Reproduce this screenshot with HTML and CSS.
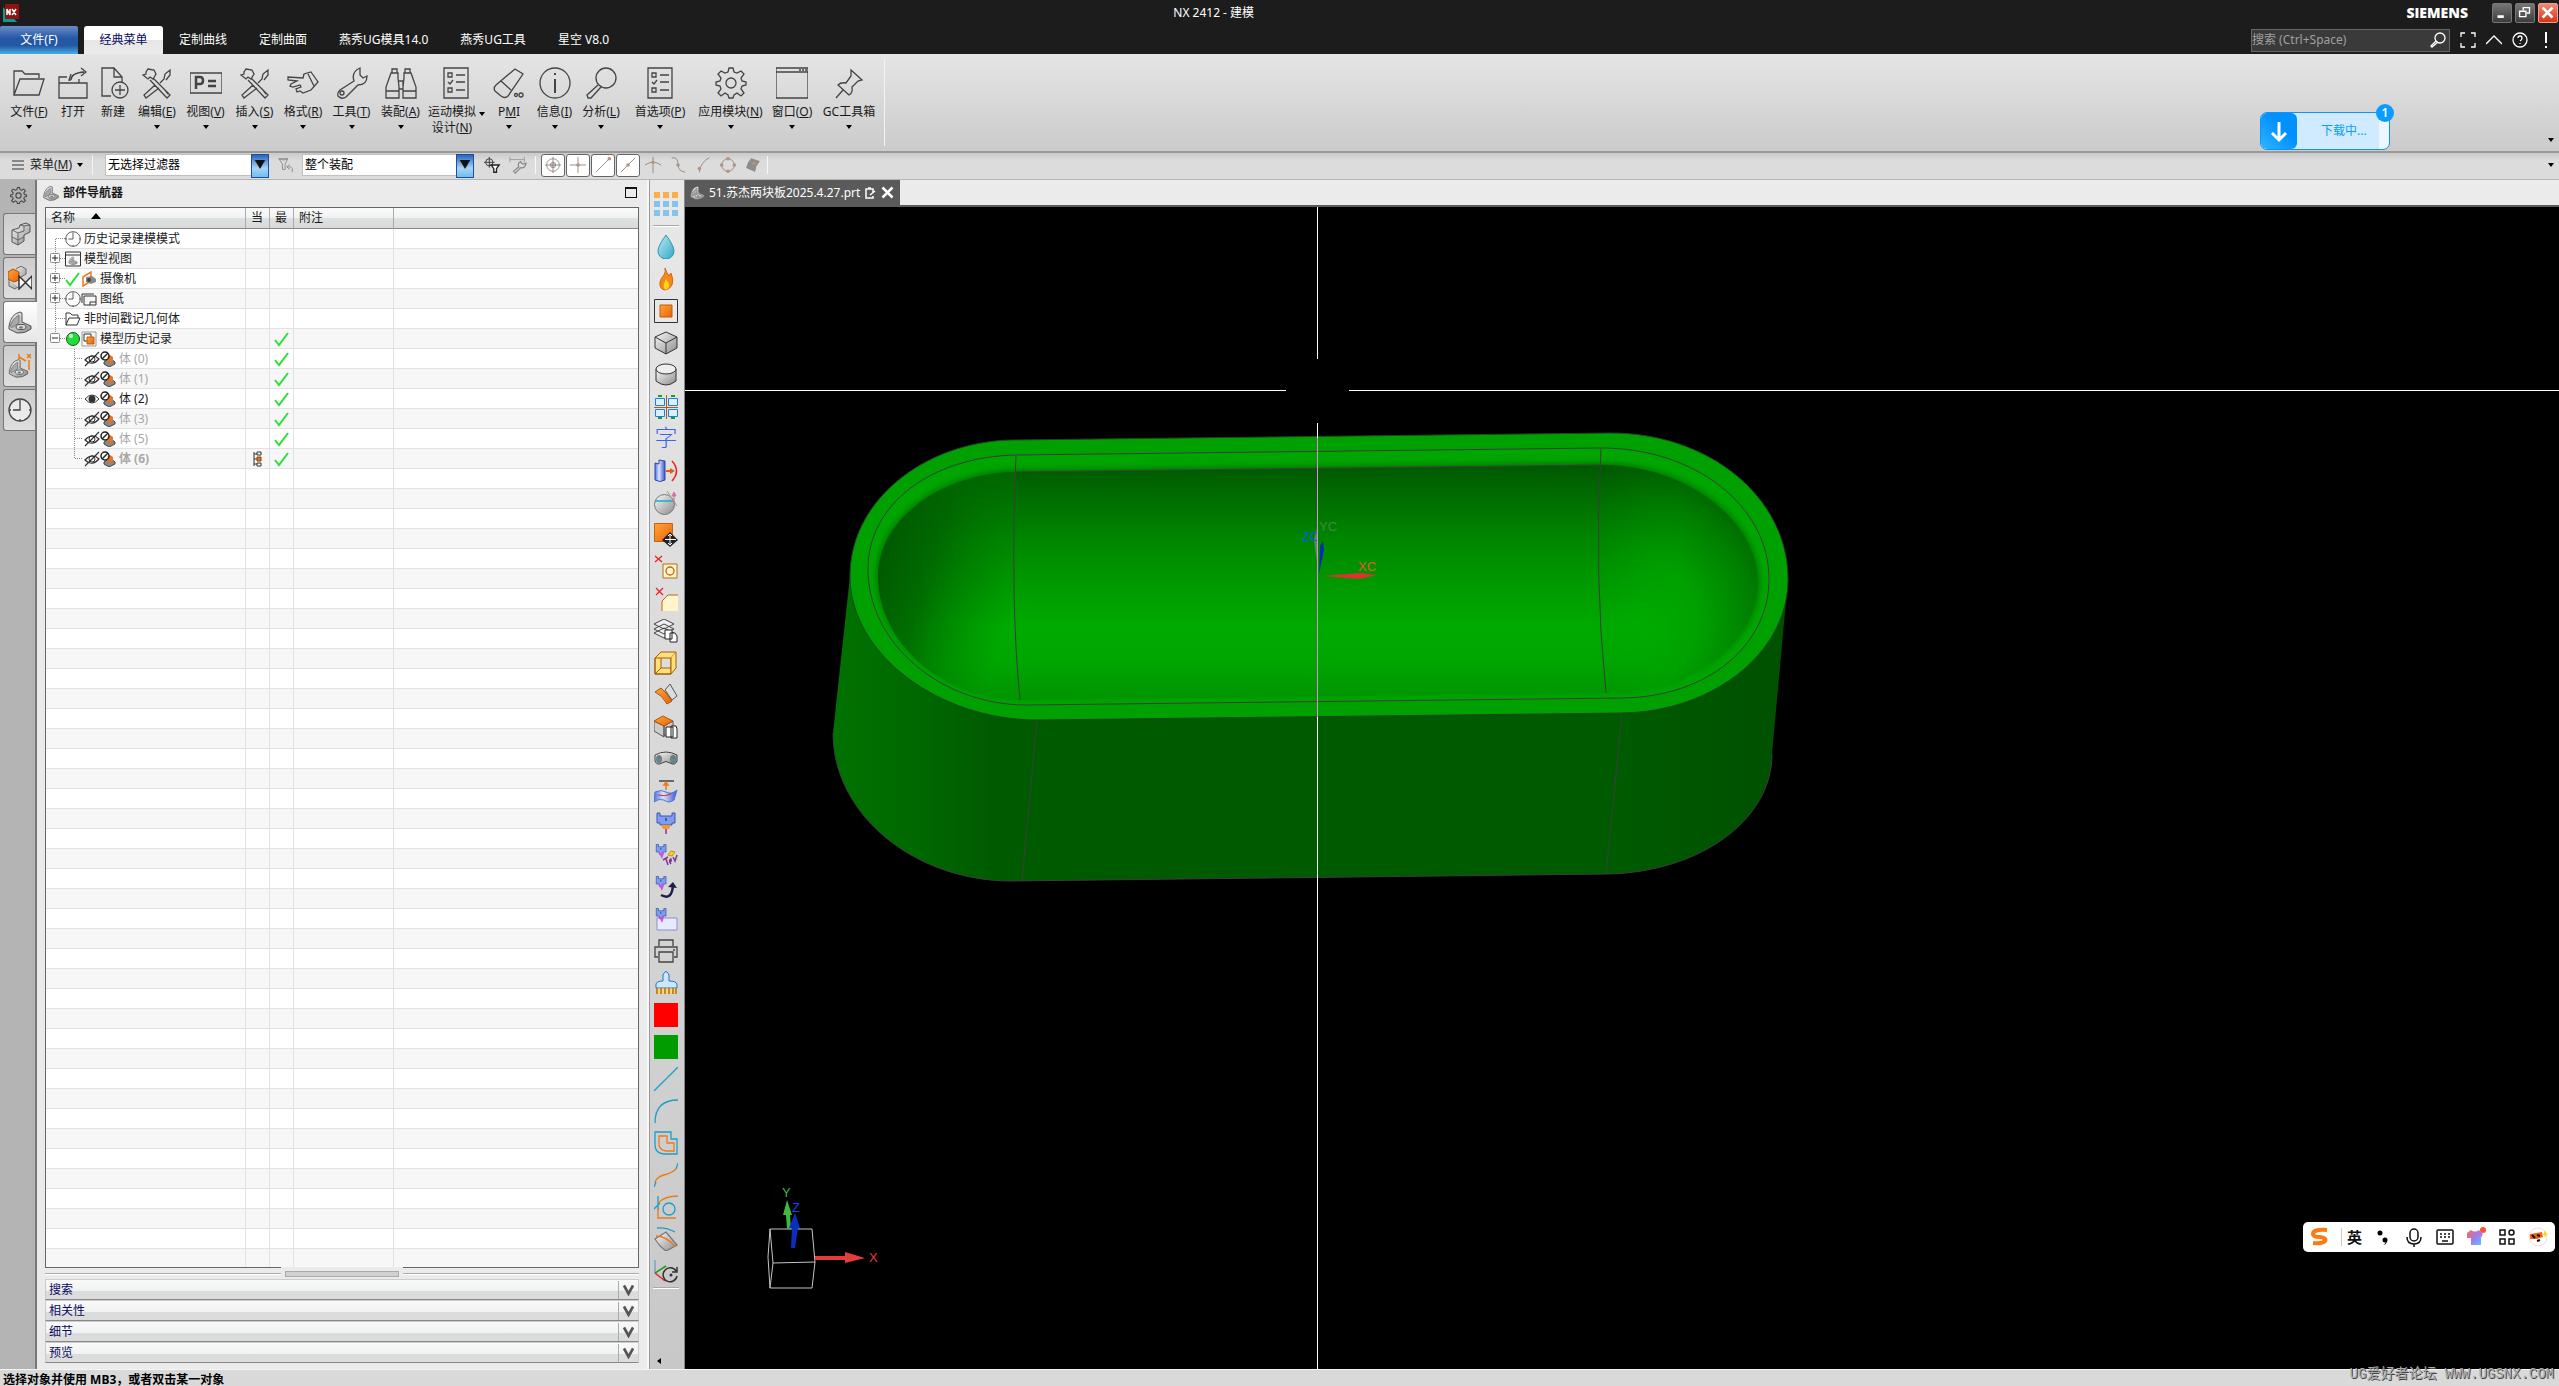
FILE: index.html
```html
<!DOCTYPE html>
<html lang="zh-CN">
<head>
    <meta charset="UTF-8">
    <title>NX 2412 - 建模</title>
    <link rel="stylesheet" href="styles.css">
    <script src="tree.js" defer></script>
</head>
<body>
    <!-- shared icons -->
    <svg class="defs" aria-hidden="true">
        <defs>
            <linearGradient id="metal" x1="0" y1="0" x2="1" y2="1"><stop offset="0" stop-color="#fafafa"/><stop offset="1" stop-color="#8c8c8c"/></linearGradient>
            <linearGradient id="orange" x1="0" y1="0" x2="1" y2="1"><stop offset="0" stop-color="#ffa436"/><stop offset="1" stop-color="#e8640a"/></linearGradient>
            <linearGradient id="blue" x1="0" y1="0" x2="1" y2="0"><stop offset="0" stop-color="#4a6fe0"/><stop offset=".4" stop-color="#dbe5ff"/><stop offset="1" stop-color="#3a55c8"/></linearGradient>
            <linearGradient id="water" x1="0" y1="0" x2="1" y2="1"><stop offset="0" stop-color="#bfeaf5"/><stop offset="1" stop-color="#2fa9c4"/></linearGradient>
            <linearGradient id="shirt" x1="0" y1="0" x2="1" y2="1"><stop offset="0" stop-color="#ff6a4a"/><stop offset=".5" stop-color="#a678f0"/><stop offset="1" stop-color="#4ad0ff"/></linearGradient>
        </defs>
        <symbol id="tools" viewBox="0 0 32 32">
            <path d="M7 2l6 1 2 4-3 5-3-2-2 2-5-4 3-1V5zM12 11l17 17-3 3L9 13M25 13l4-5V3l-5 4-1 5-4 4M14 18L3 28l2 3L18 21M24 23l3 4"/>
        </symbol>
        <symbol id="checklist" viewBox="0 0 32 32">
            <path d="M4 1h24v30H4zM8 6h4v4H8zM8 21h4v4H8zM16 8h9M16 15h9M16 23h9M8 15l2 2 3-4"/>
        </symbol>
        <symbol id="gear" viewBox="0 0 32 32">
            <path d="M14 1h4l1 4 3 1 4-2 3 3-3 4 1 3 4 1v3l-4 1-1 3 3 4-3 3-4-3-3 2-1 3h-4l-1-3-3-2-4 3-3-3 3-4-1-3-4-1v-3l4-1 1-3-3-4 3-3 4 2 3-1z"/><circle cx="16" cy="16" r="5"/>
        </symbol>
        <symbol id="bracket" viewBox="0 0 24 24">
            <path d="M1 16Q3 4 12 2l2 1v9l9 4v3q-6 5-14 4l-8-4z" fill="url(#metal)" stroke="#555"/><path d="M2 17q2-8 9-12v8l-8 5" fill="#aaa" stroke="#777"/><ellipse cx="13" cy="17" rx="5" ry="2.6" fill="#ddd" stroke="#555"/><ellipse cx="13" cy="17.500" rx="2" ry="1.200" fill="#777"/>
        </symbol>
        <symbol id="clock" viewBox="0 0 24 24">
            <circle cx="12" cy="12" r="11" fill="#fff" fill-opacity=".5" stroke="#444" stroke-width="1.300"/><path d="M12 2v10H5M1 12h2M21 12h2M12 21v2" fill="none" stroke="#444" stroke-width="1.300"/>
        </symbol>
        <symbol id="check" viewBox="0 0 16 16"><path d="M1 9l4 5L14 2" fill="none" stroke="#2be03a" stroke-width="2"/></symbol>
        <symbol id="lens" viewBox="0 0 16 16"><circle cx="10" cy="6" r="5"/><path d="M6 9l-5 5 1 1 6-5"/></symbol>
        <symbol id="eye-off" viewBox="0 0 16 16"><path d="M1 9q7-8 14-1-7 8-14 1zM1 15L15 1" fill="none" stroke="#333" stroke-width="1.200"/><circle cx="8" cy="8" r="3" fill="none" stroke="#333"/></symbol>
        <symbol id="eye" viewBox="0 0 16 16"><path d="M1 8q7-8 14 0-7 8-14 0z" fill="#fff" stroke="#333"/><circle cx="8" cy="8" r="3.500" fill="#333"/></symbol>
        <symbol id="solid" viewBox="0 0 16 16"><path d="M4 11l6-4 5 4v2l-6 3-5-3z" fill="#888" stroke="#444"/><path d="M7 5l3-1 3 2v4l-3 2-3-2z" fill="#e8731c"/><circle cx="5" cy="5" r="4" fill="#fff" fill-opacity=".7" stroke="#222" stroke-width="1.500"/><path d="M2 8l6-6" stroke="#222" stroke-width="1.500"/></symbol>
        <symbol id="line-plus" viewBox="0 0 20 19"><path d="M9.500 0v19M14 9.500h6" stroke="#888" stroke-dasharray="1 1"/><rect x="4.500" y="4.500" width="9" height="9" rx="1" fill="#fff" stroke="#888"/><path d="M6 9h6M9 6v6" stroke="#222"/></symbol>
        <symbol id="line-minus" viewBox="0 0 20 19"><path d="M9.500 0v5M14 9.500h6" stroke="#888" stroke-dasharray="1 1"/><rect x="4.500" y="4.500" width="9" height="9" rx="1" fill="#fff" stroke="#888"/><path d="M6 9h6" stroke="#222"/></symbol>
        <symbol id="line-top" viewBox="0 0 20 19"><path d="M9.500 10v9M10 9.500h9" fill="none" stroke="#888" stroke-dasharray="1 1"/></symbol>
        <symbol id="line-mid" viewBox="0 0 20 19"><path d="M9.500 0v19M10 9.500h9" fill="none" stroke="#888" stroke-dasharray="1 1"/></symbol>
        <symbol id="line-child" viewBox="0 0 38 19"><path d="M28.500 0v19M29 9.500h8" fill="none" stroke="#888" stroke-dasharray="1 1"/></symbol>
        <symbol id="line-last" viewBox="0 0 38 19"><path d="M28.500 0v10M29 9.500h8" fill="none" stroke="#888" stroke-dasharray="1 1"/></symbol>
        <symbol id="robot" viewBox="0 0 24 24"><path d="M3 2h3v3h7V2h3v10h-4v3H7v-3H3z" fill="#7f9df0" stroke="#3c55b0"/><path d="M9 7v2" stroke="#123"/></symbol>
    </svg>

    <header class="titlebar">
        <svg class="app-logo" viewBox="0 0 18 18"><path d="M0 3v15h14" fill="#0a9a9a"/><rect x="2" y="0" width="14" height="15" fill="#8f1410"/><path d="M4 11V5l3 6V5M9 5l4 6M13 5l-4 6" fill="none" stroke="#fff" stroke-width="1.500"/></svg>
        <div class="window-title">NX 2412 - 建模</div>
        <div class="brand">SIEMENS</div>
        <div class="window-buttons">
            <button aria-label="最小化"><svg viewBox="0 0 20 20"><path d="M5 14h7" stroke="#fff" stroke-width="3"/></svg></button>
            <button aria-label="还原"><svg viewBox="0 0 20 20"><path d="M4 8h7v6H4zM8 7V4h7v6h-3" fill="none" stroke="#fff" stroke-width="1.500"/></svg></button>
            <button class="close" aria-label="关闭"><svg viewBox="0 0 20 20"><path d="M4 4l11 11M15 4L4 15" stroke="#fff" stroke-width="3"/></svg></button>
        </div>
    </header>

    <nav class="menubar">
        <button class="menu-tab file">文件(F)</button>
        <button class="menu-tab active">经典菜单</button>
        <button class="menu-tab">定制曲线</button>
        <button class="menu-tab">定制曲面</button>
        <button class="menu-tab">燕秀UG模具14.0</button>
        <button class="menu-tab">燕秀UG工具</button>
        <button class="menu-tab">星空 V8.0</button>
        <div class="menu-right">
            <div class="search">
                <input type="text" aria-label="搜索" placeholder="搜索 (Ctrl+Space)">
                <svg viewBox="0 0 16 16"><use href="#lens"/></svg>
            </div>
            <button aria-label="全屏"><svg viewBox="0 0 16 16"><path d="M1 5V1h4M11 1h4v4M15 11v4h-4M5 15H1v-4"/></svg></button>
            <button aria-label="折叠"><svg viewBox="0 0 16 16"><path d="M0 12l8-8 8 8"/></svg></button>
            <button aria-label="帮助"><svg viewBox="0 0 16 16"><circle cx="8" cy="8" r="7"/><path d="M6 6q0-2 2-2t2 2-2 3M8 11v1"/></svg></button>
            <button aria-label="提示"><svg viewBox="0 0 16 16"><path d="M8 0v11M8 14v2" stroke-width="2"/></svg></button>
        </div>
    </nav>

    <section class="ribbon">
        <div class="ribbon-tools">
            <button class="tool"><svg viewBox="0 0 32 32"><path d="M1 28V4h8l3 3h14v4M1 28L7 12h24l-5 16z"/></svg>文件(<u>F</u>)<i class="arrow"></i></button>
            <button class="tool"><svg viewBox="0 0 32 32"><path d="M2 16h28v15H2zM2 16v-6h8M22 16v-4M14 13q0-7 13-8M24 1l5 4-5 4M14 13h-2l2-6"/></svg>打开</button>
            <button class="tool"><svg viewBox="0 0 32 32"><path d="M14 29H5V1h12l8 9v6M17 1v9h8"/><circle cx="23" cy="23" r="8"/><path d="M23 18v10M18 23h10"/></svg>新建</button>
            <button class="tool"><svg><use href="#tools"/></svg>编辑(<u>E</u>)<i class="arrow"></i></button>
            <button class="tool"><svg viewBox="0 0 32 32"><path d="M0 6h32v20H0z"/><path d="M6 22V10h4q3 0 3 3.500T10 17H6M18 14h8M18 19h8" stroke-width="2.500"/></svg>视图(<u>V</u>)<i class="arrow"></i></button>
            <button class="tool"><svg><use href="#tools"/></svg>插入(<u>S</u>)<i class="arrow"></i></button>
            <button class="tool"><svg viewBox="0 0 32 32"><path d="M24 5l7 10-7 8-8 3-3-2-3 1-1-3 5-2-1-2-7 2-3-1 1-2 6-3-9-1v-3l15 1 1-4zM21 7l6 12"/></svg>格式(<u>R</u>)<i class="arrow"></i></button>
            <button class="tool"><svg viewBox="0 0 32 32"><path d="M18 14q-3-9 6-13v7l3 3 4-2q0 9-9 9L10 30q-4 3-8-1-1-3 2-6z"/><circle cx="6" cy="26" r="2"/></svg>工具(<u>T</u>)<i class="arrow"></i></button>
            <button class="tool"><svg viewBox="0 0 32 32"><path d="M6 6h7v5l1 9v11H1V20zM19 6h7l5 14v11H18V20l1-9zM7 2h5v4H7zM20 2h5v4h-5zM14 14h4v8h-4M1 24h13M18 24h13"/></svg>装配(<u>A</u>)<i class="arrow"></i></button>
            <button class="tool wide"><svg><use href="#checklist"/></svg><span>运动模拟<br>设计(<u>N</u>)</span><i class="arrow"></i></button>
            <button class="tool"><svg viewBox="0 0 32 32"><path d="M22 2l8 5-15 22q-3 3-7 0l-6-5q-2-3 1-6zM8 14l10 9"/><circle cx="23" cy="28" r="1.500"/><circle cx="28" cy="28" r="2"/></svg>P<u>M</u>I<i class="arrow"></i></button>
            <button class="tool"><svg viewBox="0 0 32 32"><circle cx="16" cy="16" r="15"/><path d="M16 12v14M16 6v2" stroke-width="2"/></svg>信息(<u>I</u>)<i class="arrow"></i></button>
            <button class="tool"><svg viewBox="0 0 32 32"><circle cx="21" cy="11" r="10"/><path d="M13 18L2 28l1 3 3 0 10-11"/></svg>分析(<u>L</u>)<i class="arrow"></i></button>
            <button class="tool"><svg><use href="#checklist"/></svg>首选项(<u>P</u>)<i class="arrow"></i></button>
            <button class="tool"><svg><use href="#gear"/></svg>应用模块(<u>N</u>)<i class="arrow"></i></button>
            <button class="tool"><svg viewBox="0 0 32 32"><path d="M0 1h32v30H0zM0 5h32M23 3h2M26 3h2M29 3h2"/></svg>窗口(<u>O</u>)<i class="arrow"></i></button>
            <button class="tool"><svg viewBox="0 0 32 32"><path d="M18 3l11 10-4 1-6 6q1 6-3 8L5 18q3-3 8-2l5-7zM10 23l-7 8"/></svg>GC工具箱<i class="arrow"></i></button>
        </div>
        <div class="ribbon-end">
            <button class="download">
                <svg viewBox="0 0 36 36"><path d="M18 9v17M11 20l7 7 7-7" fill="none" stroke="#fff" stroke-width="3"/></svg>
                <span>下载中...</span>
                <b>1</b>
            </button>
            <i class="arrow"></i>
        </div>
    </section>

    <section class="selectbar">
        <button class="main-menu"><svg viewBox="0 0 12 12"><path d="M0 2h12M0 6h12M0 10h12"/></svg>菜单(<u>M</u>)<i class="arrow"></i></button>
        <label class="combo filter"><select aria-label="选择过滤器"><option>无选择过滤器</option></select></label>
        <svg class="icon" viewBox="0 0 20 20"><path d="M2 3h10l-3 6v6H6V9zM2 3q5 3 10 0M11 12h4q3 1 2 6M14 9l-3 3 3 3" stroke="#888" fill="none"/></svg>
        <label class="combo scope"><select aria-label="选择范围"><option>整个装配</option></select></label>
        <svg class="icon" viewBox="0 0 20 20"><circle cx="7" cy="7" r="4" fill="none" stroke="#333"/><path d="M7 1v12M1 7h12" stroke="#333"/><path d="M9 10h9l-3 4v4h-3v-4z" fill="#fff" stroke="#222" stroke-width="1.500"/></svg>
        <svg class="icon" viewBox="0 0 20 20"><path d="M1 4h16M1 1v6M17 1v6" stroke="#999"/><path d="M13 6q-4 2-2 6l-6 5 2 2 6-6q5 1 6-5l-3 1-2-1z" fill="none" stroke="#888" stroke-width="1.300"/></svg>
        <span class="divider"></span>
        <button class="snap on"><svg viewBox="0 0 20 20"><circle cx="10" cy="10" r="7"/><circle cx="10" cy="10" r="3"/><path d="M10 1v18M1 10h18"/><circle class="dot" cx="10" cy="10" r="2"/></svg></button>
        <button class="snap on"><svg viewBox="0 0 20 20"><path d="M10 1v18M1 10h18"/><circle class="dot" cx="10" cy="10" r="2"/></svg></button>
        <button class="snap on"><svg viewBox="0 0 20 20"><path d="M2 18L17 3"/><circle class="dot" cx="17" cy="3" r="2"/></svg></button>
        <button class="snap on"><svg viewBox="0 0 20 20"><path d="M2 18L18 2"/><circle class="dot" cx="10" cy="10" r="2"/></svg></button>
        <button class="snap"><svg viewBox="0 0 20 20"><path d="M1 10q9-6 18 0M10 1v18"/><circle class="dot" cx="10" cy="7" r="2"/></svg></button>
        <button class="snap"><svg viewBox="0 0 20 20"><path d="M3 2q7-1 7 7t8 9"/><circle class="dot" cx="10" cy="10" r="2"/></svg></button>
        <button class="snap"><svg viewBox="0 0 20 20"><path d="M17 2Q7 7 6 18"/><circle class="dot" cx="6" cy="14" r="2"/></svg></button>
        <button class="snap"><svg viewBox="0 0 20 20"><circle cx="10" cy="10" r="7"/><circle class="dot" cx="10" cy="3" r="2"/><circle class="dot" cx="10" cy="17" r="2"/><circle class="dot" cx="3" cy="10" r="2"/><circle class="dot" cx="17" cy="10" r="2"/></svg></button>
        <button class="snap"><svg viewBox="0 0 20 20"><path d="M8 3l9 3q-5 5-5 11l-9-4q1-6 5-10z" fill="#8d8d8d"/><circle class="dot" cx="11" cy="8" r="2"/></svg></button>
        <span class="divider"></span>
        <i class="arrow end"></i>
    </section>

    <main class="workspace">
        <nav class="rail">
            <button class="rail-gear" aria-label="设置"><svg class="outline" viewBox="0 0 32 32"><use href="#gear"/></svg></button>
            <button class="rail-tab"><svg viewBox="0 0 24 24"><path d="M4 8l7-2 1-3 6-2 4 2v7l-6 3v6l-6 4-6-3z" fill="url(#metal)" stroke="#555"/><path d="M4 8l6 3 6-2V4l6-1M16 4l-4-1M10 11v11M4 15l6 3 6-3" fill="none" stroke="#666"/></svg></button>
            <button class="rail-tab"><svg viewBox="0 0 24 24"><path d="M8 3l5-3 5 3v5l-5 3M1 14v6l6 3 3-2" fill="url(#metal)" stroke="#666"/><path d="M0 6l5-3 6 3v8l-5 2-6-3z" fill="url(#orange)" stroke="#a85008"/><path d="M11 10v13l13-13v13z" fill="#fff" stroke="#333" stroke-width="1.500"/></svg></button>
            <button class="rail-tab active"><svg><use href="#bracket"/></svg></button>
            <button class="rail-tab"><svg viewBox="0 0 24 24"><use href="#bracket" y="4" width="21" height="20"/><path d="M11 0v6M11 3l7 4M19 0l4 4M23 0l-4 4M21 6v10" fill="none" stroke="#ee7a10" stroke-width="1.500"/></svg></button>
            <button class="rail-tab"><svg><use href="#clock"/></svg></button>
        </nav>

        <aside class="navigator">
            <div class="navigator-title">
                <svg><use href="#bracket"/></svg>
                <h2>部件导航器</h2>
                <button aria-label="最大化"></button>
            </div>
            <div class="tree">
                <table>
                    <colgroup><col class="c-name"><col class="c-flag"><col class="c-flag"><col class="c-note"><col></colgroup>
                    <thead>
                        <tr><th>名称<i class="sort"></i></th><th>当</th><th>最</th><th>附注</th><th></th></tr>
                    </thead>
                    <tbody id="tree-body">
                        <tr><td><div class="node"><svg class="guide"><use href="#line-top"/></svg><svg><use href="#clock"/></svg>历史记录建模模式</div></td><td></td><td></td><td></td><td></td></tr>
                        <tr><td><div class="node"><svg class="guide"><use href="#line-plus"/></svg><svg viewBox="0 0 16 16"><path d="M.500 1h15v14H.500zM1 4h14" fill="none" stroke="#333"/><use href="#bracket" x="3" y="5" width="10" height="9"/></svg>模型视图</div></td><td></td><td></td><td></td><td></td></tr>
                        <tr><td><div class="node"><svg class="guide"><use href="#line-plus"/></svg><svg><use href="#check"/></svg><svg viewBox="0 0 16 16"><path d="M2 6l8-5v9l-8 5z" fill="none" stroke="#e87a1c" stroke-width="1.500"/><path d="M5 6l6-1 4 3v3l-5 2-5-2z" fill="#888"/><circle cx="8" cy="9" r="2" fill="#444"/></svg>摄像机</div></td><td></td><td></td><td></td><td></td></tr>
                        <tr><td><div class="node"><svg class="guide"><use href="#line-plus"/></svg><svg><use href="#clock"/></svg><svg viewBox="0 0 16 16"><path d="M1 12V3h12M3 5h12v9H3zM9 14v-3h6" fill="none" stroke="#333"/></svg>图纸</div></td><td></td><td></td><td></td><td></td></tr>
                        <tr><td><div class="node"><svg class="guide"><use href="#line-mid"/></svg><svg viewBox="0 0 16 16"><path d="M1 14V2h4l2 2h6v3M1 14l3-7h11l-3 7z" fill="none" stroke="#333"/></svg>非时间戳记几何体</div></td><td></td><td></td><td></td><td></td></tr>
                        <tr><td><div class="node"><svg class="guide"><use href="#line-minus"/></svg><svg viewBox="0 0 16 16"><circle cx="8" cy="8" r="6.500" fill="#20dd38" stroke="#225522"/><circle cx="6" cy="5" r="2" fill="#c8ffd0"/></svg><svg viewBox="0 0 16 16"><path d="M1 1h14v14H1z" fill="none" stroke="#999"/><path d="M3 3h7v7H3z" fill="#fff" stroke="#333"/><path d="M6 6h7v7H6z" fill="url(#orange)" stroke="#c45a0a"/></svg>模型历史记录</div></td><td></td><td><svg><use href="#check"/></svg></td><td></td><td></td></tr>
                        <tr class="off"><td><div class="node"><svg class="guide child"><use href="#line-child"/></svg><svg><use href="#eye-off"/></svg><svg><use href="#solid"/></svg>体 (0)</div></td><td></td><td><svg><use href="#check"/></svg></td><td></td><td></td></tr>
                        <tr class="off"><td><div class="node"><svg class="guide child"><use href="#line-child"/></svg><svg><use href="#eye-off"/></svg><svg><use href="#solid"/></svg>体 (1)</div></td><td></td><td><svg><use href="#check"/></svg></td><td></td><td></td></tr>
                        <tr><td><div class="node"><svg class="guide child"><use href="#line-child"/></svg><svg><use href="#eye"/></svg><svg><use href="#solid"/></svg>体 (2)</div></td><td></td><td><svg><use href="#check"/></svg></td><td></td><td></td></tr>
                        <tr class="off"><td><div class="node"><svg class="guide child"><use href="#line-child"/></svg><svg><use href="#eye-off"/></svg><svg><use href="#solid"/></svg>体 (3)</div></td><td></td><td><svg><use href="#check"/></svg></td><td></td><td></td></tr>
                        <tr class="off"><td><div class="node"><svg class="guide child"><use href="#line-child"/></svg><svg><use href="#eye-off"/></svg><svg><use href="#solid"/></svg>体 (5)</div></td><td></td><td><svg><use href="#check"/></svg></td><td></td><td></td></tr>
                        <tr class="off work"><td><div class="node"><svg class="guide child"><use href="#line-last"/></svg><svg><use href="#eye-off"/></svg><svg><use href="#solid"/></svg>体 (6)</div></td><td><svg viewBox="0 0 16 16"><path d="M4 1v14M4 3h3M4 8h3M4 13h3M7 1h4v3H7zM7 12h4v3H7z" fill="none" stroke="#333"/><path d="M7 6h4v4H7z" fill="#e8731c" stroke="#8a4408"/></svg></td><td><svg><use href="#check"/></svg></td><td></td><td></td></tr>
                    </tbody>
                </table>
            </div>
            <div class="splitter"><span></span></div>
            <button class="fold">搜索<svg viewBox="0 0 12 12"><path d="M1 1l5 9 5-9"/></svg></button>
            <button class="fold">相关性<svg viewBox="0 0 12 12"><path d="M1 1l5 9 5-9"/></svg></button>
            <button class="fold">细节<svg viewBox="0 0 12 12"><path d="M1 1l5 9 5-9"/></svg></button>
            <button class="fold">预览<svg viewBox="0 0 12 12"><path d="M1 1l5 9 5-9"/></svg></button>
        </aside>

        <div class="sidebar">
            <svg class="grid-icon" viewBox="0 0 24 24"><path d="M0 0h6v6H0zM9 0h6v6H9zM18 0h6v6h-6z" fill="#fcae48"/><path d="M0 9h6v6H0zM9 9h6v6H9zM18 9h6v6h-6zM0 18h6v6H0zM9 18h6v6H9zM18 18h6v6h-6z" fill="#84c4ec"/></svg>
            <hr>
            <button><svg viewBox="0 0 24 24"><path d="M12 0q8 11 8 16a8 8 0 0 1-16 0Q4 11 12 0z" fill="url(#water)" stroke="#2a9ab4"/></svg></button>
            <button><svg viewBox="0 0 24 24"><path d="M11 1q1 4 4 8l2-3q3 7 1 12-3 5-7 5-6-1-5-8 1-4 4-7 2-3 1-7z" fill="#f58a1c" stroke="#d8660a"/><path d="M12 12q4 5 3 8-3 5-5 1-1-4 2-9z" fill="#ffd21c"/></svg></button>
            <button><svg viewBox="0 0 24 24"><path d="M.500 .500h23v23H.500z" fill="#e8e8e8" stroke="#333"/><path d="M6 6h12v12H6z" fill="url(#orange)" stroke="#c4580a"/></svg></button>
            <button><svg viewBox="0 0 24 24"><path d="M12 1l11 5v11l-11 6-11-6V6z" fill="url(#metal)" stroke="#333"/><path d="M1 6l11 6 11-6M12 12v11" fill="none" stroke="#333"/></svg></button>
            <button><svg viewBox="0 0 24 24"><path d="M2 6v12q10 8 20 0V6" fill="url(#metal)" stroke="#333"/><ellipse cx="12" cy="6" rx="10" ry="5" fill="#eee" stroke="#333"/></svg></button>
            <button><svg viewBox="0 0 24 24"><path d="M12.500 0v24M0 12.500h24" stroke="#b85a0a"/><path d="M1.500 3.500h9v7h-9zM14.500 3.500h9v7h-9zM1.500 14.500h9v7h-9zM14.500 14.500h9v7h-9z" fill="#dceeff" stroke="#1680ee"/><path d="M4 1h4M17 1h4M4 23h4M17 23h4" stroke="#19a01c" stroke-width="2"/></svg></button>
            <button class="glyph">字</button>
            <button><svg viewBox="0 0 24 24"><path d="M1 4l4 1V1l6 1v19q-5 3-10 0z" fill="url(#blue)" stroke="#3048a8"/><path d="M12 12h7" stroke="#e85a1c" stroke-width="2"/><path d="M16 9l5 3-5 3z" fill="#e85a1c"/><path d="M18 2q9 10 0 20" fill="none" stroke="#e22" stroke-width="1.500"/></svg></button>
            <button><svg viewBox="0 0 24 24"><circle cx="10.500" cy="13.500" r="10" fill="url(#metal)" stroke="#777"/><path d="M1 10h19" stroke="#17a8cc" stroke-width="1.500"/><path d="M13 0l10 15" stroke="#999"/><path d="M20 13V3M18 5l2-4 2 4z" fill="#d6709c" stroke="#d6709c"/></svg></button>
            <button><svg viewBox="0 0 24 24"><path d="M.500 .500h18v18h-18z" fill="url(#orange)" stroke="#c4640a"/><path d="M16 9l8 8-8 7-8-7z" fill="#222"/><path d="M16 11v11M11 16.500h11M14 13l2-2 2 2M14 20l2 2 2-2" fill="none" stroke="#fff"/></svg></button>
            <button><svg viewBox="0 0 24 24"><path d="M1 1l7 6M8 1L1 7" stroke="#e22" stroke-width="1.300"/><path d="M9 9h14v14H9z" fill="#fff4cc" stroke="#b86a14"/><circle cx="16" cy="16" r="4" fill="none" stroke="#b86a14" stroke-width="1.300"/></svg></button>
            <button><svg viewBox="0 0 24 24"><path d="M2 1l7 7M9 1L2 8" stroke="#e22" stroke-width="1.300"/><path d="M8 24V14l6-6h10v16z" fill="#fff4cc"/><path d="M8 24V14l6-6h10" fill="none" stroke="#b86a14"/></svg></button>
            <button><svg viewBox="0 0 24 24"><path d="M0 14l10-5 10 5-10 5zM0 10l10-5 10 5-10 5zM0 5l10-5 10 5-10 5z" fill="#eee" stroke="#444"/><path d="M11 11h7v9h-7zM16 14h5l2 3v6h-7z" fill="#fff" stroke="#222"/></svg></button>
            <button><svg viewBox="0 0 24 24"><path d="M1 7l6-6h15l-5 6v16H1z" fill="#ffe07a" stroke="#a85a08"/><path d="M17 7l5-6v16l-5 6z" fill="#ffe07a"/><path d="M7 8h9v9H7z" fill="#ddd"/><path d="M1 7h16v16H1zM7 7v10h10M1 23l6-6M17 23l5-6V1" fill="none" stroke="#a85a08"/></svg></button>
            <button><svg viewBox="0 0 24 24"><path d="M11 7l5-6 7 12-5 4z" fill="#ddd" stroke="#555"/><path d="M1 9l6-4q5 4 11 13l-5 3Q8 12 1 9z" fill="url(#orange)" stroke="#a8560c"/></svg></button>
            <button><svg viewBox="0 0 24 24"><path d="M0 6l10 5v11L0 16zM10 11l9-5v9l-9 6z" fill="#ccc" stroke="#555"/><path d="M0 6l9-5 10 5-9 5z" fill="url(#orange)" stroke="#a8560c"/><path d="M12 12h7v10h-7zM17 11h5l1 3v9h-6z" fill="#fff" stroke="#222"/></svg></button>
            <button><svg viewBox="0 0 24 24"><path d="M1 8q11-6 22 0v6q-2 5-7 2-4-3-8 0-5 3-7-2z" fill="url(#metal)" stroke="#444"/><ellipse cx="5" cy="12" rx="3" ry="4" fill="#777"/><ellipse cx="19" cy="12" rx="3" ry="4" fill="#777"/><path d="M1 13h6M17 13h6" stroke="#1cb0d8"/></svg></button>
            <button><svg viewBox="0 0 24 24"><path d="M1 13q6-3 11 0t11-2l-3 10q-5 4-10 0-5-2-10 2z" fill="url(#blue)" stroke="#4878d8"/><path d="M4 16q7 2 13-1" fill="none" stroke="#e22"/><path d="M5 2h15" stroke="#444" stroke-width="1.500"/><path d="M12 11V4M10 6l2-3 2 3z" fill="#f07818" stroke="#f07818" stroke-width="1.500"/></svg></button>
            <button><svg viewBox="0 0 24 24"><path d="M3 2h3v3h12V2h3v10h-3v2H6v-2H3z" fill="#7f9df0" stroke="#3c55b0"/><path d="M7 14h10l-2 4h-2v5h-2v-5H9z" fill="#f59a2a"/><path d="M12 18v5" stroke="#a858a8" stroke-width="2"/><path d="M12 7v3" stroke="#123"/></svg></button>
            <button><svg viewBox="0 0 24 24"><use href="#robot" width="18" height="18"/><path d="M5 10h5l-2 6z" fill="#d84ae0"/><path d="M14 12l3-4 4 1-3 4z" fill="#ffd21c" stroke="#c8900a"/><path d="M9 17l5-3M12 16l2 6M15 19q3 0 2-3-3 1 0 5M19 14l2 4 2-6" fill="none" stroke="#7a3a98" stroke-width="1.500"/></svg></button>
            <button><svg viewBox="0 0 24 24"><use href="#robot" width="18" height="18"/><path d="M5 10h5l-2 6z" fill="#d84ae0"/><path d="M7 20q11 6 12-10" fill="none" stroke="#1c2048" stroke-width="2.500"/><path d="M14 12l5-5 4 6z" fill="#1c2048"/></svg></button>
            <button><svg viewBox="0 0 24 24"><path d="M3 11h20v12H3z" fill="#e8eaff" stroke="#8a8fd8"/><use href="#robot" width="18" height="18"/><path d="M5 10h5l-2 6z" fill="#d84ae0"/></svg></button>
            <button><svg class="outline" viewBox="0 0 24 24"><path d="M5 7V1h14v6M4 18H1V8h22v10h-3M5 13h14v10H5zM19 11h2"/></svg></button>
            <button><svg viewBox="0 0 24 24"><path d="M9 10V4q3-7 6 0v6q7 0 8 3v4H2v-4q1-3 7-3z" fill="#cfe6ff" stroke="#1c74d0"/><path d="M3 20h20" stroke="#ffd86a" stroke-width="5"/><path d="M3 17v6M7 17v6M11 17v6M15 17v6M19 17v6M22 17v6" stroke="#b86a14" stroke-width="1.500"/></svg></button>
            <button><svg viewBox="0 0 24 24"><path d="M0 0h24v24H0z" fill="#f00"/></svg></button>
            <button><svg viewBox="0 0 24 24"><path d="M0 0h24v24H0z" fill="#009c00"/></svg></button>
            <button class="curve"><svg viewBox="0 0 24 24"><path d="M0 24L24 0"/></svg></button>
            <button class="curve"><svg viewBox="0 0 24 24"><path d="M1 24Q1 1 24 1"/></svg></button>
            <button class="curve"><svg viewBox="0 0 24 24"><path d="M1 1h16v7h6v15H10q-9-1-9-9z"/><path class="warm" d="M5 5h8v7h7v8h-8q-7-1-7-7z"/></svg></button>
            <button class="curve"><svg viewBox="0 0 24 24"><path class="warm" d="M1 20q1-6 9-8t12-6"/><path d="M0 24l2-5M22 6l2-6"/></svg></button>
            <button class="curve"><svg viewBox="0 0 24 24"><path d="M4 1v14M0 14l6-6"/><circle cx="15" cy="14" r="6"/><path class="warm" d="M4 8Q11 1 24 1M4 13v10h18"/></svg></button>
            <button class="curve"><svg viewBox="0 0 24 24"><path d="M1 12l11-7 11 13-11 6Q5 19 1 12z" fill="url(#metal)" stroke="#777"/><path d="M3 1q9-1 18 4"/><path class="warm" d="M2 9q11 0 19 11"/></svg></button>
            <button><svg viewBox="0 0 24 24"><path d="M1 1v13" stroke="#3c98c0"/><path d="M1 14l11-7" stroke="#1ba01c" stroke-width="1.500"/><path d="M1 14l10 8" stroke="#e22" stroke-width="1.500"/><path d="M22 12a7 7 0 1 0 1 5M23 8v5h-5" fill="none" stroke="#333" stroke-width="1.500"/><circle cx="17" cy="16" r="1.500" fill="#333"/></svg></button>
            <hr>
            <i class="arrow left"></i>
        </div>

        <section class="document">
            <div class="doc-tabs">
                <div class="doc-tab">
                    <svg><use href="#bracket"/></svg>
                    <span>51.苏杰两块板2025.4.27.prt</span>
                    <svg viewBox="0 0 12 12"><path d="M9 5V2H2v9h7V9M4 1h3M6 8l5-4" fill="none" stroke="#fff" stroke-width="1.500"/></svg>
                    <button aria-label="关闭"><svg viewBox="0 0 12 12"><path d="M2 2l8 8M10 2l-8 8" stroke="#fff" stroke-width="2"/></svg></button>
                </div>
            </div>
            <div class="viewport">
                <svg class="scene" viewBox="685 207 1874 1162">
                    <defs>
                        <linearGradient id="side" gradientUnits="userSpaceOnUse" x1="833" y1="0" x2="1788" y2="0">
                            <stop offset="0" stop-color="#007200"/><stop offset=".09" stop-color="#006800"/><stop offset=".17" stop-color="#005a00"/><stop offset=".83" stop-color="#005a00"/><stop offset="1" stop-color="#005000"/>
                        </linearGradient>
                        <linearGradient id="shade" gradientUnits="userSpaceOnUse" x1="0" y1="466" x2="0" y2="700">
                            <stop offset="0" stop-color="#005400"/><stop offset=".5" stop-color="#006000"/><stop offset="1" stop-color="#009800"/>
                        </linearGradient>
                        <linearGradient id="floor" gradientUnits="userSpaceOnUse" x1="0" y1="468" x2="0" y2="702">
                            <stop offset="0" stop-color="#005a00"/><stop offset=".15" stop-color="#007000"/><stop offset=".3" stop-color="#008600"/><stop offset=".5" stop-color="#009a00"/><stop offset=".68" stop-color="#00aa00"/><stop offset=".82" stop-color="#00a600"/><stop offset="1" stop-color="#009400"/>
                        </linearGradient>
                        <linearGradient id="left-end" gradientUnits="userSpaceOnUse" x1="881" y1="560" x2="1015" y2="600">
                            <stop offset="0" stop-color="#005a00"/><stop offset=".35" stop-color="#006400" stop-opacity=".85"/><stop offset="1" stop-color="#008000" stop-opacity="0"/>
                        </linearGradient>
                        <radialGradient id="right-end" gradientUnits="userSpaceOnUse" cx="1635" cy="622" r="160">
                            <stop offset="0" stop-color="#00ae00"/><stop offset=".4" stop-color="#00a000"/><stop offset=".75" stop-color="#007e00"/><stop offset="1" stop-color="#005c00"/>
                        </radialGradient>
                        <linearGradient id="right-fade" gradientUnits="userSpaceOnUse" x1="1598" y1="0" x2="1680" y2="0"><stop offset="0" stop-color="#000"/><stop offset="1" stop-color="#fff"/></linearGradient>
                        <mask id="right-mask"><path d="M1598 440h180v270h-180z" fill="url(#right-fade)"/></mask>
                        <filter id="soft"><feGaussianBlur stdDeviation="4"/></filter>
                        <path id="lip" d="M1016 455L1601 448C1695 448 1769 506 1769 579C1769 645 1708 697 1622 698L1027 705C940 705 868 643 868 569C868 505 930 457 1016 455Z"/>
                        <path id="bottom" d="M1015 472L1601 465C1685 465 1758 520 1758 583C1758 645 1690 692 1606 693L1020 700C945 700 878 645 878 576C878 520 940 474 1015 472Z"/>
                        <clipPath id="lip-clip"><use href="#lip"/></clipPath>
                        <clipPath id="bottom-clip"><use href="#bottom"/></clipPath>
                    </defs>
                    <path d="M850 576L833 733C833 815 915 881 1011 881L1608 874C1700 872 1772 820 1772 754L1788 579Z" fill="url(#side)"/>
                    <path class="edge" d="M833 733C833 815 915 881 1011 881L1608 874C1700 872 1772 820 1772 754M1037 720L1022 881M1622 713L1606 874"/>
                    <path d="M1011 440L1611 433C1710 433 1788 498 1788 579C1788 655 1710 712 1622 713L1037 720C940 720 850 655 850 576C850 500 925 442 1011 440Z" fill="#00a000" stroke="#224422"/>
                    <use href="#lip" fill="#00a600"/>
                    <g clip-path="url(#lip-clip)"><use href="#bottom" fill="url(#shade)" filter="url(#soft)"/></g>
                    <use href="#bottom" fill="url(#floor)"/>
                    <g clip-path="url(#bottom-clip)">
                        <path d="M860 450h155v260H860z" fill="url(#left-end)"/>
                        <path d="M1598 440h180v270h-180z" fill="url(#right-end)" mask="url(#right-mask)"/>
                    </g>
                    <use href="#lip" class="edge"/>
                    <path class="edge" d="M1016 455Q1010 600 1020 700M1601 448Q1594 580 1606 693M1015 472L1601 465"/>
                    <!-- work coordinate system -->
                    <path d="M1318 570l-4-30 3-12z" fill="#5c8c5c"/>
                    <path d="M1319 574l1-28 3-5 1 9z" fill="#0a2cae"/>
                    <path d="M1323 576l37-3 16 2-16 4z" fill="#e23030"/>
                    <text class="axis" x="1302" y="541" fill="#0a5ae8">ZC</text>
                    <text class="axis" x="1319" y="531" fill="#3d8c3d">YC</text>
                    <text class="axis" x="1358" y="571" fill="#e05a28">XC</text>
                    <!-- crosshair -->
                    <path d="M1317.500 207V359M1317.500 423V1369M685 390.500H1286M1349 390.500H2559" stroke="#fff"/>
                    <path d="M1317.500 438V717" stroke="#dc8cdc"/>
                    <!-- view triad -->
                    <path d="M770 1229H812L815 1262 812 1288H770L768 1257ZM770 1229L773 1263 770 1288M773 1263L815 1262" fill="none" stroke="#c4c4c4"/>
                    <path d="M787 1200l5 15h-2l1 14h-4l-1-14h-3z" fill="#3fb83f"/>
                    <path d="M795 1213l5 15h-2l-3 20h-4l1-20h-3z" fill="#0a2fc0"/>
                    <path d="M815 1256h30v-4l20 6-20 5v-3h-30z" fill="#e43c3c"/>
                    <text class="axis" x="782" y="1197" fill="#3fb83f">Y</text>
                    <text class="axis" x="792" y="1212" fill="#1040ff">Z</text>
                    <text class="axis" x="869" y="1262" fill="#e43c3c">X</text>
                </svg>
                <div class="ime">
                    <svg viewBox="0 0 20 20"><path d="M17 3Q3 2 3 7q0 3 7 3 7 1 5 4-3 3-12 2" fill="none" stroke="#ff7a10" stroke-width="4"/></svg>
                    <span class="ime-line"></span>
                    <button>英</button>
                    <button><svg viewBox="0 0 20 20"><circle cx="7" cy="6" r="2.500"/><circle cx="12" cy="13" r="2.500"/><path d="M14 13q0 4-3 5"/></svg></button>
                    <button><svg class="stroke" viewBox="0 0 20 20"><rect x="6" y="2" width="8" height="12" rx="4"/><path d="M3 10q0 7 7 7t7-7M10 17v3"/></svg></button>
                    <button><svg class="stroke" viewBox="0 0 20 20"><rect x="2" y="3" width="16" height="14" rx="1"/><path d="M5 7h2M9 7h2M13 7h2M5 10h2M9 10h2M13 10h2M7 14h6"/></svg></button>
                    <button><svg viewBox="0 0 20 20"><path d="M1 6l4-3q4 3 8 0l4 4-2 4v7H5v-7H1z" fill="url(#shirt)"/><circle cx="17" cy="3" r="3" fill="#ff5030"/></svg></button>
                    <button><svg class="stroke" viewBox="0 0 20 20"><path d="M3 3h5v5H3zM3 12h5v5H3zM12 12h5v5h-5z"/><circle cx="14.500" cy="5.500" r="2.500"/></svg></button>
                    <button><svg viewBox="0 0 20 20"><circle cx="10" cy="10" r="9" fill="#fff" stroke="#f3dcd6"/><path d="M2 7l12-2 1 5-6 2-7 0z" fill="#f0641c"/><path d="M4 8l3 3M9 8l3 1M9 14l3-1" stroke="#111" stroke-width="2"/><path d="M17 3l1 3 2 1-2 1-1 3-1-3-2-1 2-1z" fill="#ffd21c"/></svg></button>
                </div>
            </div>
        </section>
    </main>

    <footer class="status">
        <span>选择对象并使用 MB3，或者双击某一对象</span>
        <span class="watermark">UG爱好者论坛 WWW.UGSNX.COM</span>
    </footer>
</body>
</html>
```
FILE: styles.css
```css
* {
    box-sizing: border-box;
}

body {
    margin: 0;
    height: 100vh;
    display: flex;
    flex-direction: column;
    overflow: hidden;
    font-family: "Noto Sans", "Noto Sans CJK SC", sans-serif;
    font-size: 12px;
    line-height: 16px;
    color: #1a1a1a;
    background: #ebebeb;
}

.defs {
    position: absolute;
    width: 0;
    height: 0;
}

button {
    font: inherit;
    color: inherit;
    background: none;
    border: none;
    padding: 0;
}

svg {
    display: block;
    flex: none;
}

.arrow {
    border: 3px solid transparent;
    border-top: 4px solid #000;
    border-bottom: 0;
    width: 0;
    height: 0;
}

.outline,
.ribbon-tools svg {
    fill: none;
    stroke: #444;
    stroke-width: 1.3px;
}

/* title bar */
.titlebar {
    display: flex;
    flex: none;
    height: 26px;
    background: #1c1c1c;
    color: #fff;
    align-items: center;
}

.app-logo {
    width: 18px;
    height: 18px;
    margin-left: 3px;
}

.window-title {
    flex: 1;
    text-align: center;
}

.brand {
    font-family: "Open Sans", sans-serif;
    font-size: 14px;
    font-weight: 800;
    margin-right: 24px;
}

.window-buttons {
    display: flex;
    gap: 3px;
    padding-right: 1px;
}

.window-buttons button {
    width: 20px;
    height: 20px;
    border: 1px solid #777;
    border-radius: 2px;
    background: linear-gradient(#777, #3c3c3c);
}

.window-buttons .close {
    background: linear-gradient(#f08a78, #d83214);
    border-color: #f0a090;
}

/* menu tabs */
.menubar {
    display: flex;
    flex: none;
    height: 28px;
    background: #1c1c1c;
    color: #fff;
}

.menu-tab {
    padding: 0 16px;
}

.menu-tab.file {
    width: 78px;
    margin-right: 6px;
    border-radius: 2px 2px 0 0;
    background: linear-gradient(#6a8cc8 0, #2457a4 45%, #2457a4 70%, #48aee4 100%);
}

.menu-tab.active {
    width: 79px;
    padding: 0;
    border-radius: 3px 3px 0 0;
    background: linear-gradient(#fff 0, #fff 50%, #e6e6e6 50%, #ececec 100%);
    color: #0a0a60;
}

.menu-right {
    display: flex;
    margin-left: auto;
    align-items: center;
    gap: 10px;
    padding-right: 5px;
}

.menu-right svg {
    width: 16px;
    height: 16px;
    fill: none;
    stroke: #fff;
    stroke-width: 1.3px;
}

.search {
    display: flex;
    align-items: center;
    width: 199px;
    height: 23px;
    border: 1px solid #666;
    background: #3a3a3a;
    padding-right: 3px;
}

.search input {
    flex: 1;
    min-width: 0;
    border: none;
    padding: 0;
    background: none;
    font: inherit;
    color: #fff;
}

.search input::placeholder {
    color: #a0a0a0;
}

/* ribbon */
.ribbon {
    display: flex;
    flex: none;
    justify-content: space-between;
    height: 99px;
    border-bottom: 2px solid #999;
    background: linear-gradient(#e5e5e5, #cbcbcb);
}

.ribbon-tools {
    display: grid;
    grid-template-columns: 48px 40px 40px 48px 49px 49px 48px 49px 49px 62px 44px 47px 46px 72px 69px 54px 60px;
    margin: 5px 0;
    padding: 0 5px;
    border-right: 1px solid #f4f4f4;
}

.tool {
    display: block;
    text-align: center;
    white-space: nowrap;
    padding-top: 8px;
    align-self: start;
}

.tool svg {
    width: 32px;
    height: 32px;
    margin: 0 auto 5px;
}

.tool .arrow {
    display: block;
    margin: 5px auto 0;
}

.tool.wide {
    position: relative;
}

.tool.wide span {
    display: block;
    padding-right: 8px;
}

.tool.wide .arrow {
    position: absolute;
    right: 2px;
    bottom: 20px;
}

.ribbon-end {
    display: flex;
    align-items: flex-end;
    gap: 158px;
    padding: 0 5px 1px 0;
}

.ribbon-end > .arrow {
    margin-bottom: 8px;
}

.download {
    position: relative;
    display: flex;
    align-items: center;
    width: 130px;
    height: 38px;
    border: 1px solid #0a94ff;
    border-radius: 7px;
    background: linear-gradient(90deg, #d0eaff 118px, #eef7ff 118px);
    color: #0a9cff;
}

.download svg {
    width: 36px;
    height: 36px;
    border-radius: 6px;
    background: linear-gradient(45deg, #30b4ff, #0090ff 60%);
}

.download span {
    margin-left: 24px;
}

.download b {
    position: absolute;
    right: -5px;
    top: -9px;
    width: 18px;
    height: 18px;
    border-radius: 9px;
    background: #0a9cff;
    color: #fff;
    font-weight: 600;
    line-height: 18px;
}

/* selection bar */
.selectbar {
    display: flex;
    flex: none;
    align-items: center;
    height: 27px;
    padding: 0 5px 2px 12px;
    border-bottom: 1px solid #b4b4b4;
    background: linear-gradient(#cacaca, #dcdcdc 30%);
}

.main-menu {
    display: flex;
    align-items: center;
    padding-right: 9px;
    margin-right: 12px;
    height: 20px;
    border-right: 1px solid #f4f4f4;
}

.main-menu svg {
    width: 12px;
    height: 12px;
    margin-right: 6px;
    stroke: #333;
}

.main-menu .arrow {
    margin-left: 5px;
}

.combo {
    position: relative;
}

.combo select {
    display: block;
    appearance: none;
    width: 100%;
    height: 22px;
    border: 1px solid #c0c0c0;
    border-radius: 0;
    padding: 0 2px;
    background: #fff;
    font: inherit;
    color: #000;
}

.filter {
    width: 164px;
}

.scope {
    width: 172px;
}

/* drop-down button over the select's right edge */
.combo::after {
    content: "▼";
    position: absolute;
    right: 0;
    top: 0;
    width: 16px;
    height: 22px;
    border: 1px solid #1c50a0;
    background: linear-gradient(#2c62b8, #a8d4f8 60%, #70bcf0);
    color: #111;
    font-size: 11px;
    line-height: 20px;
    text-align: center;
    pointer-events: none;
}

.selectbar .icon {
    width: 18px;
    height: 18px;
    margin: 0 7px 0 8px;
}

.scope + .icon {
    margin: 0 0 0 9px;
}

.selectbar .divider {
    width: 1px;
    height: 18px;
    background: #f8f8f8;
    margin: 0 5px 0 1px;
}

.snap {
    width: 24px;
    height: 23px;
    padding: 1px;
    margin-right: 1px;
}

.snap.on {
    border: 1px solid #666;
    border-radius: 3px;
    background: #fff;
    padding: 1px 0;
}

.snap svg {
    width: 18px;
    height: 18px;
    margin: 0 auto;
    fill: none;
    stroke: #888;
}

.snap .dot {
    fill: #b49480;
    stroke: none;
}

.selectbar .end {
    margin-left: auto;
}

/* workspace */
.workspace {
    flex: 1;
    min-height: 0;
    display: flex;
}

.rail {
    width: 37px;
    flex: none;
    display: flex;
    flex-direction: column;
    gap: 2px;
    padding-left: 3px;
    background: #b4b4b4;
    border-right: 2px solid #777;
}

.rail-gear {
    height: 31px;
    margin-right: 2px;
}

.rail-gear svg {
    width: 17px;
    height: 17px;
    margin: 0 auto;
    stroke-width: 2px;
}

.rail-tab {
    height: 42px;
    border: 1px solid #777;
    border-right: none;
    border-radius: 3px 0 0 3px;
    background: linear-gradient(#cdcdcd, #dedede);
    padding-left: 4px;
}

.rail-tab.active {
    background: linear-gradient(#fff, #e6e6e6);
    margin-right: -2px;
}

.rail-tab svg {
    width: 24px;
    height: 24px;
}

.navigator {
    width: 612px;
    flex: none;
    display: flex;
    flex-direction: column;
    padding: 0 8px 6px;
    border-right: 2px solid #f8f8f8;
}

.navigator-title {
    display: flex;
    align-items: center;
    height: 27px;
    flex: none;
    padding-bottom: 2px;
}

.navigator-title svg {
    width: 16px;
    height: 16px;
    margin: 0 4px 0 -2px;
}

.navigator-title h2 {
    margin: 0;
    flex: 1;
    font-size: 12px;
    line-height: 16px;
}

.navigator-title button {
    width: 12px;
    height: 11px;
    border: 1px solid #111;
    border-top-width: 2px;
    margin-right: 2px;
}

.tree {
    flex: 1;
    min-height: 0;
    overflow: hidden;
    border: 1px solid #666;
    background: #fff;
}

.tree table {
    width: 100%;
    table-layout: fixed;
    border-spacing: 0;
    line-height: 18px;
}

.c-name {
    width: 200px;
}

.c-flag {
    width: 24px;
}

.c-note {
    width: 100px;
}

.tree th {
    height: 21px;
    padding: 0 5px;
    text-align: left;
    font-weight: normal;
    background: linear-gradient(#fafafa, #f0f2f2 50%, #dfe2e2 50%, #d8dada);
    border-right: 1px solid #aaa;
    border-bottom: 1px solid #888;
}

.tree td {
    height: 20px;
    padding: 0;
    border-right: 1px solid #e2e2e2;
    border-bottom: 1px solid #e2e2e2;
}

.tree th:last-child,
.tree td:last-child {
    border-right: none;
}

.tree tbody tr:nth-child(even) {
    background: #f7f7f7;
}

.tree td svg {
    width: 16px;
    height: 16px;
    margin: 0 auto;
}

.sort {
    display: inline-block;
    margin: 0 0 3px 16px;
    border: 5px solid transparent;
    border-top: 0;
    border-bottom: 6px solid #000;
}

.node {
    display: flex;
    align-items: center;
    height: 19px;
    white-space: nowrap;
}

.tree .node svg {
    margin: 0;
}

.tree .node .guide {
    width: 20px;
    height: 19px;
    margin-right: -1px;
    fill: none;
}

.tree .node .guide.child {
    width: 38px;
    margin-right: 0;
}

.tree .node svg:last-of-type {
    margin-right: 3px;
}

.off {
    color: #a8a8a8;
}

.work {
    font-weight: bold;
}

.splitter {
    display: flex;
    align-items: center;
    justify-content: center;
    height: 11px;
    flex: none;
    background: linear-gradient(transparent 5px, #aaa 5px, #aaa 6px, #fff 6px, #fff 7px, transparent 7px);
}

.splitter span {
    width: 114px;
    height: 6px;
    border: 1px solid #aaa;
    background: #d0d0d0;
    outline: 4px solid #ebebeb;
}

.fold {
    display: flex;
    flex: none;
    justify-content: space-between;
    align-items: center;
    height: 21px;
    padding-left: 3px;
    border: 1px solid #ccc;
    border-bottom: 1px solid #888;
    background: linear-gradient(#f9f9f9, #f0f1f1 60%, #dadcdd 60%, #dcdcdc);
    color: #0a0a60;
}

.fold svg {
    width: 20px;
    height: 18px;
    padding: 3px 4px;
    border-left: 1px solid #aaa;
    fill: none;
    stroke: #555;
    stroke-width: 3px;
}

/* vertical toolbar */
.sidebar {
    width: 36px;
    flex: none;
    display: flex;
    flex-direction: column;
    align-items: center;
    padding-right: 2px;
    border-left: 1px solid #999;
    border-right: 1px solid #888;
    background: linear-gradient(#e8e8e8, #c8c8c8);
}

.sidebar svg {
    width: 24px;
    height: 24px;
}

.sidebar .grid-icon {
    margin: 12px 0 9px;
}

.sidebar button {
    flex: none;
    height: 32px;
    padding: 4px 0;
}

.sidebar .glyph {
    padding: 0 0 4px;
    font-size: 23px;
    font-weight: 300;
    line-height: 24px;
    color: #3c64f0;
}

.sidebar hr {
    width: 26px;
    margin: 0 0 4px;
    border: none;
    border-top: 1px solid #aaa;
    border-bottom: 1px solid #fff;
}

.sidebar .left {
    margin: auto 20px 6px auto;
    transform: rotate(90deg);
}

.curve svg {
    fill: none;
    stroke: #18a0c8;
    stroke-width: 1.3px;
}

.curve .warm {
    stroke: #ee7a18;
}

/* document area */
.document {
    flex: 1;
    min-width: 0;
    display: flex;
    flex-direction: column;
}

.doc-tabs {
    display: flex;
    flex: none;
    height: 27px;
    border-bottom: 2px solid #5a5a5a;
}

.doc-tab {
    display: flex;
    align-items: center;
    gap: 4px;
    padding: 0 5px;
    background: #5a5a5a;
    color: #fff;
}

.doc-tab svg {
    width: 12px;
    height: 12px;
}

.doc-tab svg:first-child {
    width: 15px;
    height: 15px;
}

.viewport {
    flex: 1;
    min-height: 0;
    position: relative;
    background: #000;
}

.scene {
    width: 100%;
    height: 100%;
}

.edge {
    fill: none;
    stroke: #3a3f3a;
}

.axis {
    font-family: "Liberation Sans", sans-serif;
    font-size: 13px;
}

/* floating input method bar */
.ime {
    position: absolute;
    right: 4px;
    bottom: 117px;
    width: 252px;
    height: 30px;
    display: flex;
    align-items: center;
    justify-content: space-between;
    padding: 0 7px;
    border-radius: 5px;
    background: #fff;
    color: #111;
}

.ime button {
    font-size: 15px;
    font-weight: bold;
}

.ime svg {
    width: 20px;
    height: 20px;
}

.ime .stroke {
    fill: none;
    stroke: #111;
    stroke-width: 1.5px;
}

.ime-line {
    width: 1px;
    height: 18px;
    margin-right: -6px;
    background: #ccc;
}

/* status bar */
.status {
    position: relative;
    flex: none;
    height: 17px;
    padding: 2px 3px 0;
    border-top: 1px solid #f4f4f4;
    background: #d9d9d9;
    font-weight: bold;
    color: #000;
    white-space: nowrap;
}

.watermark {
    position: absolute;
    right: 5px;
    bottom: 4px;
    font-family: "Liberation Mono", "Noto Sans CJK SC", monospace;
    font-size: 14px;
    font-weight: normal;
    color: #aaa;
    text-shadow: 1px 1px #444;
}
```
FILE: tree.js
```js
// fill the rest of the tree with empty striped rows
const body = document.getElementById('tree-body');

for (let i = body.rows.length; i < 52; i++) {
    const row = body.insertRow();
    for (let c = 0; c < 5; c++) {
        row.insertCell();
    }
}
```
